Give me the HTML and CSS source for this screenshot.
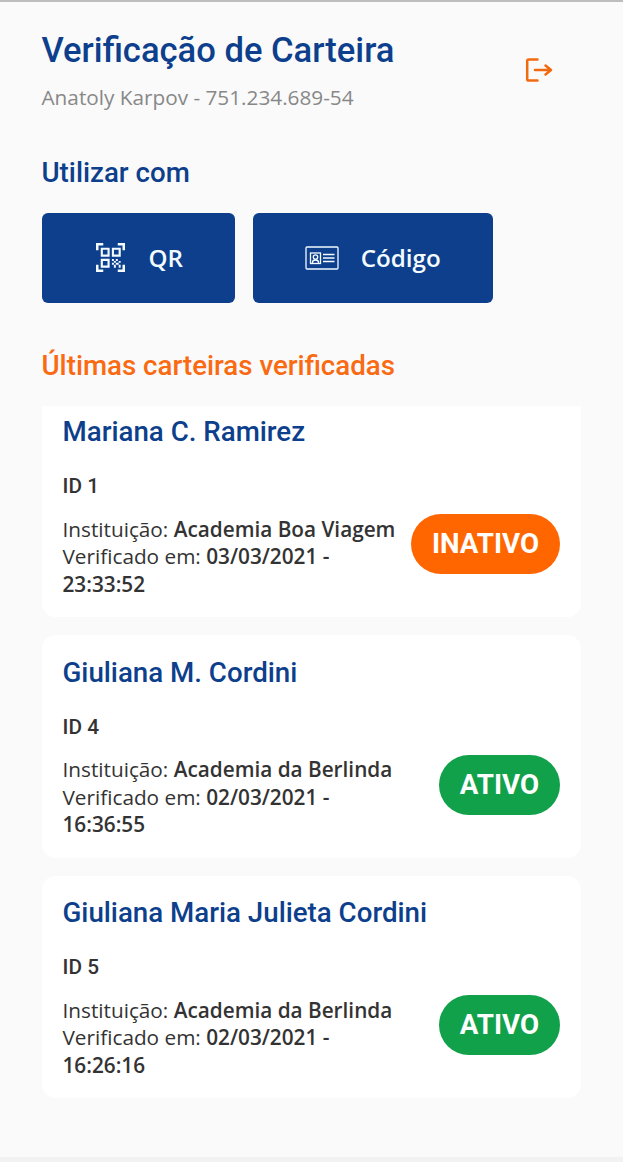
FILE: index.html
```html
<!DOCTYPE html>
<html lang="pt-BR">
<head>
  <meta charset="UTF-8">
  <meta name="viewport" content="width=device-width, initial-scale=1.0">
  <title>Verificação de Carteira</title>
  <link rel="stylesheet" href="styles.css">
</head>
<body>

  <header class="header">
    <div>
      <h1>Verificação de Carteira</h1>
      <p class="user">Anatoly Karpov - 751.234.689-54</p>
    </div>
    <button class="logout" aria-label="Sair">
      <svg width="28" height="26" viewBox="0 0 28 26" fill="none" stroke="currentColor" stroke-width="2.5" stroke-linecap="round" stroke-linejoin="round">
        <path d="M12.500 2.500H3.800Q2.200 2.500 2.200 4.100V21.900Q2.200 23.500 3.800 23.500H12.500"/>
        <path d="M10 13H25.500M20.500 8.500L26 13L20.500 17.500"/>
      </svg>
    </button>
  </header>

  <h2>Utilizar com</h2>
  <div class="actions">
    <button class="btn btn-qr">
      <svg class="icon" width="29" height="29" viewBox="0 0 30 30" fill="none" stroke="currentColor">
        <path stroke-width="2.6" d="M1.300 7.500V1.300H7.500M22.500 1.300H28.700V7.500M28.700 22.500V28.700H22.500M7.500 28.700H1.300V22.500"/>
        <path stroke-width="2.2" d="M6 6H13V13H6ZM17.500 6H24.500V13H17.500ZM6 17.500H13V24.500H6Z"/>
        <path fill="currentColor" stroke="none" d="M16.500 16.500h2v2h-2zM20.500 16.500h2v2h-2zM23.500 18.500h2v2h-2zM18.500 18.500h2v2h-2zM16.500 20.500h2v2h-2zM20.500 20.500h3v2h-3zM18.500 22.500h2v3h-2zM23.500 22.500h2v3h-2z"/>
      </svg>
      QR
    </button>
    <button class="btn btn-code">
      <svg class="icon" width="34" height="24" viewBox="0 0 34 24" fill="none" stroke="currentColor" stroke-width="1.3">
        <rect x="1" y="1" width="32" height="22" rx="1"/>
        <rect x="5.500" y="7" width="10" height="10.500"/>
        <circle cx="10.500" cy="11" r="2.200"/>
        <path d="M7.500 17.500V16.500Q7.500 14 10.500 14T13.500 16.500V17.500M18 8.500H29.500M18 12H29.500M18 15.500H29.500"/>
      </svg>
      Código
    </button>
  </div>

  <h2 class="recent-title">Últimas carteiras verificadas</h2>
  <main class="list">
    <div class="card">
      <h3>Mariana C. Ramirez</h3>
      <p class="card-id">ID 1</p>
      <div class="card-body">
        <p>Instituição: <b>Academia Boa Viagem</b><br>Verificado em: <b>03/03/2021 -<br>23:33:52</b></p>
        <span class="status inactive">INATIVO</span>
      </div>
    </div>
    <div class="card">
      <h3>Giuliana M. Cordini</h3>
      <p class="card-id">ID 4</p>
      <div class="card-body">
        <p>Instituição: <b>Academia da Berlinda</b><br>Verificado em: <b>02/03/2021 -<br>16:36:55</b></p>
        <span class="status">ATIVO</span>
      </div>
    </div>
    <div class="card">
      <h3>Giuliana Maria Julieta Cordini</h3>
      <p class="card-id">ID 5</p>
      <div class="card-body">
        <p>Instituição: <b>Academia da Berlinda</b><br>Verificado em: <b>02/03/2021 -<br>16:26:16</b></p>
        <span class="status">ATIVO</span>
      </div>
    </div>
  </main>

</body>
</html>
```
FILE: styles.css
```css
* {
  box-sizing: border-box;
}

body {
  margin: 0;
  height: 1162px;
  padding: 27px 42px 0 41.5px;
  background-color: #fafafa;
  border-top: 2px solid #bdbdbd;
  border-bottom: 5px solid #f2f2f2;
  font-family: "Open Sans", sans-serif;
  color: #333;
  overflow: hidden;
}

h1, h2, h3, p {
  margin: 0;
}

h1, h2, h3 {
  font-family: Roboto, sans-serif;
  font-weight: 500;
  color: #0d3f8c;
  white-space: nowrap;
}

button {
  border: none;
  padding: 0;
  cursor: pointer;
}

.header {
  display: flex;
  justify-content: space-between;
  align-items: center;
  padding-right: 28px;
}

h1 {
  font-size: 34.6px;
  line-height: 42px;
}

.user {
  margin-top: 12px;
  font-size: 20.75px;
  line-height: 28px;
  color: #888;
}

.logout {
  display: flex;
  background: none;
  color: #f26a10;
}

h2 {
  margin-top: 46px;
  font-size: 27.7px;
  line-height: 32px;
}

.actions {
  display: flex;
  gap: 17.5px;
  margin-top: 23.5px;
}

.btn {
  display: flex;
  align-items: center;
  justify-content: center;
  gap: 24px;
  height: 90px;
  border-radius: 6px;
  background-color: #0d3f8c;
  color: #f4fbff;
  font-family: "Open Sans", sans-serif;
  font-size: 24.2px;
  font-weight: 600;
}

.btn-qr {
  width: 193.5px;
  padding-left: 2px;
}

.btn-code {
  width: 240.5px;
  gap: 22px;
}

.recent-title {
  margin-top: 47.5px;
  color: #f96a12;
}

/* scrolled slightly, so the first card is cut at the top */
.list {
  margin-top: 24px;
  height: 700px;
  overflow: hidden;
}

.card {
  height: 222.5px;
  margin-bottom: 18px;
  padding: 20.5px 21px;
  border-radius: 14px;
  background-color: #fff;
}

.card:first-child {
  margin-top: -11.5px;
}

h3 {
  font-size: 27.7px;
  line-height: 33px;
}

.card-id {
  margin-top: 24px;
  font-family: Roboto, sans-serif;
  font-size: 20.8px;
  font-weight: 500;
  line-height: 28px;
}

.card-body {
  display: flex;
  justify-content: space-between;
  align-items: center;
  margin-top: 15.5px;
  white-space: nowrap;
}

.card-body p {
  font-size: 20.75px;
  line-height: 27.7px;
}

.card-body b {
  font-weight: 600;
}

.status {
  height: 60px;
  margin-top: -26px;
  padding: 0 21px;
  border-radius: 30px;
  background-color: #12a14b;
  color: #fff;
  font-family: Roboto, sans-serif;
  font-size: 27.7px;
  font-weight: 700;
  line-height: 60px;
}

.status.inactive {
  background-color: #ff6600;
}
```
